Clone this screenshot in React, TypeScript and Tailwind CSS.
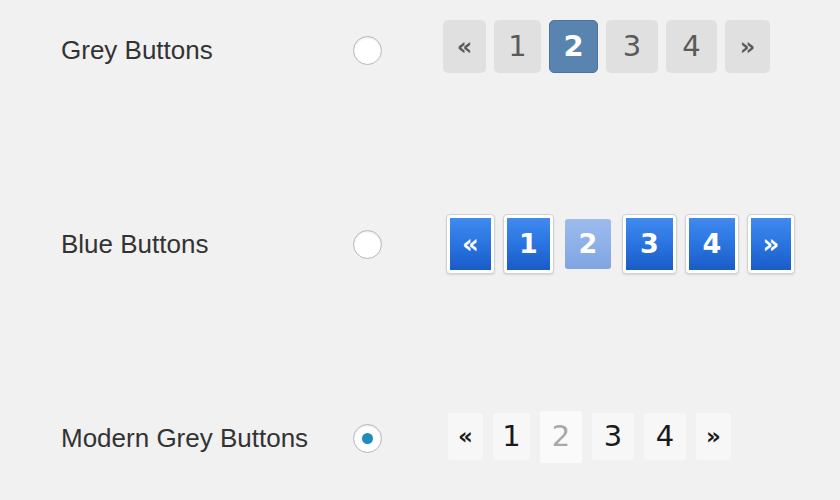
import React from 'react';

const labelFont = { fontFamily: '"Liberation Sans", Arial, sans-serif' };
const numFont = { fontFamily: '"DejaVu Sans", Verdana, sans-serif' };

const Radio: React.FC<{ checked?: boolean }> = ({ checked }) => (
  <div className="w-[29px] h-[29px] rounded-full bg-white border border-[#b4b9be] shadow-[inset_0_1px_2px_rgba(0,0,0,0.1)] flex items-center justify-center shrink-0">
    {checked && <div className="w-[11px] h-[11px] rounded-full bg-[#1e8cbe]" />}
  </div>
);

const Row: React.FC<{ label: string; checked?: boolean; children: React.ReactNode }> = ({ label, checked, children }) => (
  <div className="flex items-center h-[60px]">
    <div className="w-[353px] shrink-0 pl-[61px] whitespace-nowrap text-[26px] text-[#333] leading-none" style={labelFont}>
      {label}
    </div>
    <Radio checked={checked} />
    {children}
  </div>
);

const GreyButtons: React.FC = () => {
  const items = [
    { t: '«', w: 'w-[43px]', small: true },
    { t: '1', w: 'w-[47px]' },
    { t: '2', w: 'w-[49px]', active: true },
    { t: '3', w: 'w-[52px]' },
    { t: '4', w: 'w-[51px]' },
    { t: '»', w: 'w-[45px]', small: true },
  ];
  return (
    <div className="flex gap-[8px] ml-[61px] -mt-[7px]" style={numFont}>
      {items.map((it, i) => (
        <div
          key={i}
          className={`${it.w} h-[53px] rounded-[5px] flex items-center justify-center ${
            it.active ? 'bg-[#5a84b0] text-white border border-[#4c74a0] font-bold' : 'bg-[#e0e0e0] text-[#5a5a5a]'
          } ${it.small ? 'text-[24px] font-bold' : 'text-[29px]'}`}
        >
          {it.t}
        </div>
      ))}
    </div>
  );
};

const BlueButtons: React.FC = () => {
  const items = [
    { t: '«', w: 'w-[49px]', small: true },
    { t: '1', w: 'w-[51px]' },
    { t: '2', w: 'w-[46px]', active: true },
    { t: '3', w: 'w-[55px]' },
    { t: '4', w: 'w-[54px]' },
    { t: '»', w: 'w-[48px]', small: true },
  ];
  return (
    <div className="flex items-center gap-[8px] ml-[64px]" style={numFont}>
      {items.map((it, i) =>
        it.active ? (
          <div
            key={i}
            className={`${it.w} h-[50px] mx-[3px] rounded-[3px] bg-linear-to-b from-[#9dbcee] to-[#7fa5e2] text-white font-bold text-[27px] flex items-center justify-center`}
          >
            {it.t}
          </div>
        ) : (
          <div
            key={i}
            className={`${it.w} h-[60px] rounded-[4px] bg-white border border-[#d2d2d2] p-[3px] shadow-[0_1px_2px_rgba(0,0,0,0.12)]`}
          >
            <div
              className={`w-full h-full bg-linear-to-b from-[#3f8bee] via-[#2a74e0] to-[#1a5cc6] text-white font-bold flex items-center justify-center ${
                it.small ? 'text-[26px]' : 'text-[27px]'
              }`}
            >
              {it.t}
            </div>
          </div>
        )
      )}
    </div>
  );
};

const ModernButtons: React.FC = () => {
  const items = [
    { t: '«', w: 'w-[35px]', small: true },
    { t: '1', w: 'w-[37px]' },
    { t: '2', w: 'w-[42px]', active: true },
    { t: '3', w: 'w-[42px]' },
    { t: '4', w: 'w-[42px]' },
    { t: '»', w: 'w-[35px]', small: true },
  ];
  return (
    <div className="flex items-center gap-[10px] ml-[66px] -mt-[3px]" style={numFont}>
      {items.map((it, i) => (
        <div
          key={i}
          className={`${it.w} ${it.active ? 'h-[52px] bg-[#fafafa] text-[#a8a8a8]' : 'h-[47px] bg-[#f7f7f7] text-[#1a1a1a]'} rounded-[3px] flex items-center justify-center ${
            it.small ? 'text-[23px] font-bold' : 'text-[29px]'
          }`}
        >
          {it.t}
        </div>
      ))}
    </div>
  );
};

export default function App() {
  return (
    <div className="w-[840px] h-[500px] bg-[#f1f1f1] flex flex-col gap-[134px] pt-[20px] overflow-hidden">
      <Row label="Grey Buttons">
        <GreyButtons />
      </Row>
      <Row label="Blue Buttons">
        <BlueButtons />
      </Row>
      <Row label="Modern Grey Buttons" checked>
        <ModernButtons />
      </Row>
    </div>
  );
}
